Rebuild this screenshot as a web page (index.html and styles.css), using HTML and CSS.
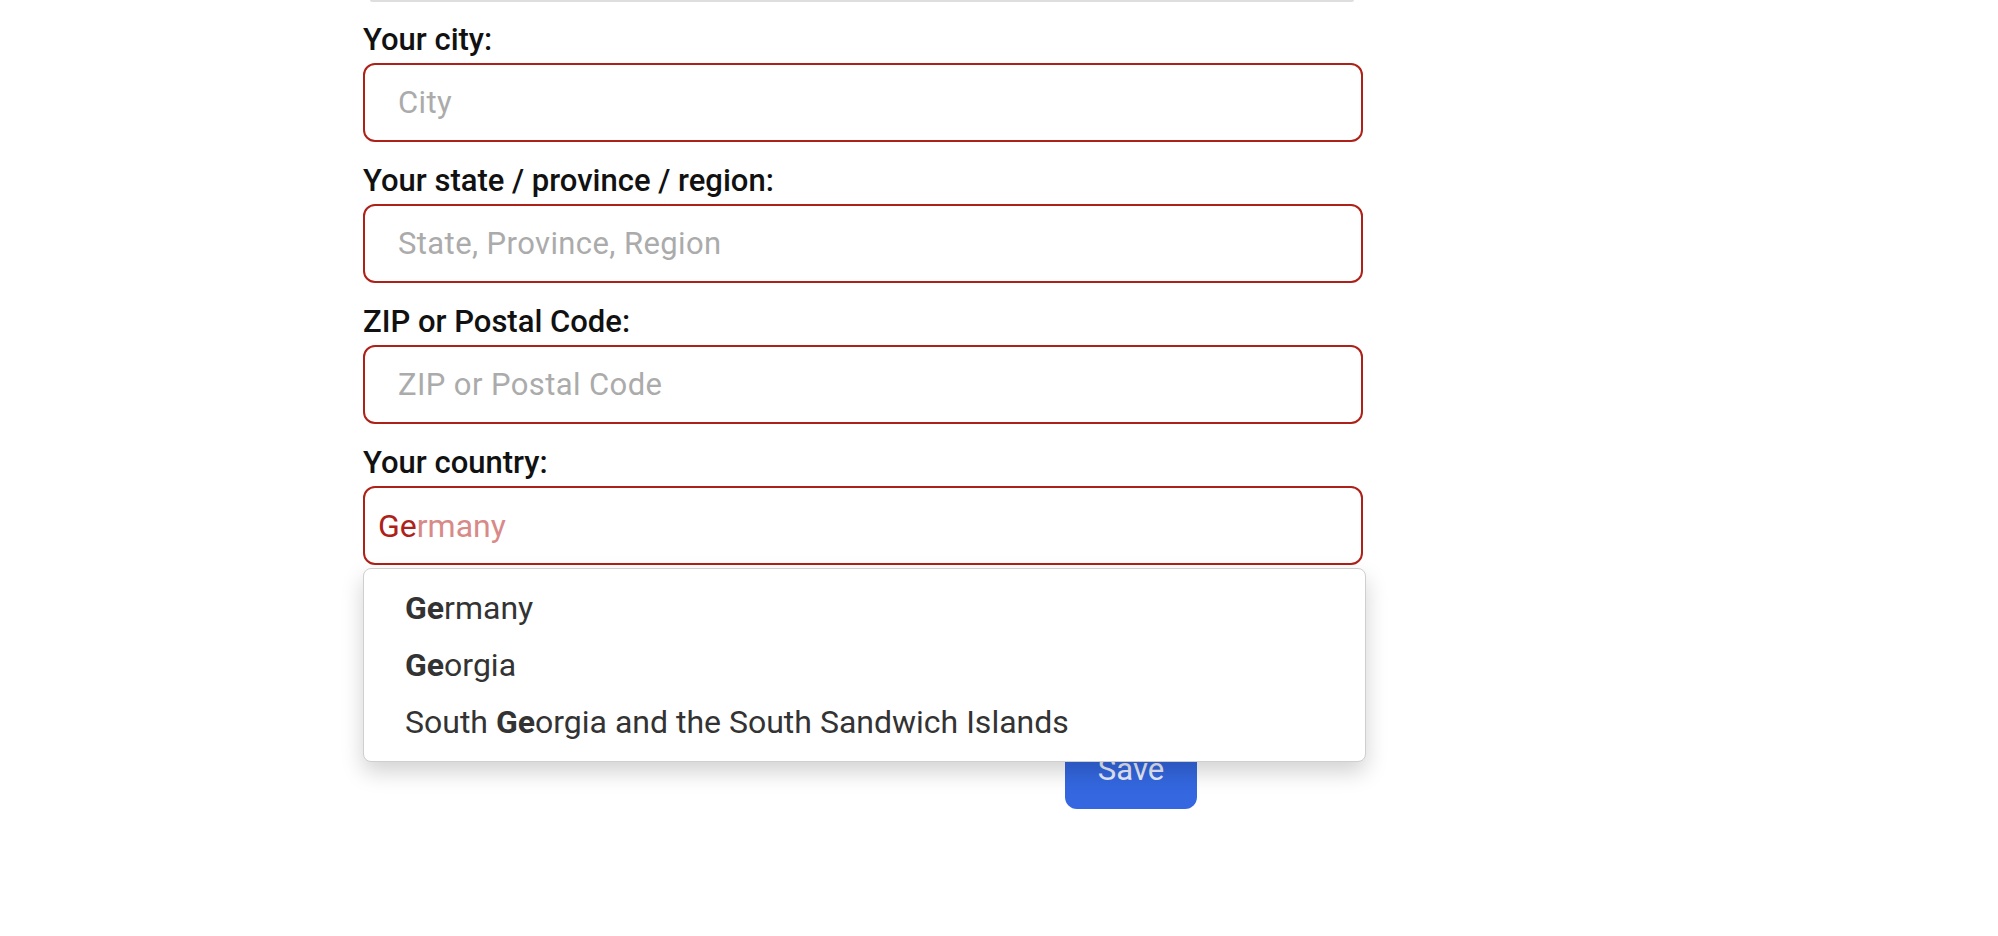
FILE: index.html
```html
<!DOCTYPE html>
<html lang="en">
<head>
<meta charset="utf-8">
<title>Address form</title>
<link rel="stylesheet" href="styles.css">
</head>
<body>
<div class="page">
  <div class="top-edge"></div>
  <form class="form">
    <div class="field">
      <label class="label">Your city:</label>
      <input class="input" type="text" placeholder="City">
    </div>
    <div class="field">
      <label class="label">Your state / province / region:</label>
      <input class="input" type="text" placeholder="State, Province, Region">
    </div>
    <div class="field">
      <label class="label">ZIP or Postal Code:</label>
      <input class="input" type="text" placeholder="ZIP or Postal Code">
    </div>
    <div class="field field-country">
      <label class="label">Your country:</label>
      <div class="input country-input"><span class="typed">Ge</span><span class="ghost">rmany</span></div>
      <ul class="dropdown">
        <li class="option"><b>Ge</b>rmany</li>
        <li class="option"><b>Ge</b>orgia</li>
        <li class="option">South <b>Ge</b>orgia and the South Sandwich Islands</li>
      </ul>
    </div>
    <div class="field">
      <label class="label">Your phone number:</label>
      <input class="input input-plain" type="text" placeholder="Phone">
    </div>
    <div class="actions">
      <button class="save" type="button">Save</button>
    </div>
  </form>
</div>
</body>
</html>
```

FILE: styles.css
```css
* { box-sizing: border-box; }
html, body {
  margin: 0;
  padding: 0;
  background: #ffffff;
  font-family: Roboto, "Liberation Sans", Arial, sans-serif;
}
.page {
  width: 1000px;
  margin-left: 363px;
}
.top-edge {
  height: 2px;
  margin: 0 9px 0 7px;
  background: #dedede;
  border-radius: 0 0 8px 8px;
}
.form {
  display: flex;
  flex-direction: column;
  gap: 21px;
  padding-top: 20px;
}
.field {
  display: flex;
  flex-direction: column;
  gap: 5px;
}
.field-country { position: relative; }
.label {
  font-size: 31px;
  font-weight: 500;
  line-height: 36px;
  color: #111111;
}
.input {
  display: block;
  width: 100%;
  height: 79px;
  border: 2px solid #ad2119;
  border-radius: 12px;
  padding: 0 20px 0 33px;
  font-family: Roboto, "Liberation Sans", Arial, sans-serif;
  font-size: 31px;
  letter-spacing: 0.4px;
  color: #222;
  background: #fff;
  outline: none;
}
.input::placeholder { color: #ababab; }
.input-plain { border-color: #cfcfcf; }
.country-input {
  display: flex;
  align-items: center;
  padding-left: 13px;
  font-size: 32px;
  letter-spacing: 0;
}
.typed { color: #ad2119; }
.ghost { color: #d88a88; }
.dropdown {
  position: absolute;
  left: 0;
  top: 123px;
  width: 1003px;
  height: 194px;
  margin: 0;
  padding: 11px 0;
  list-style: none;
  background: #fff;
  border: 1.5px solid #cfcfcf;
  border-radius: 8px;
  box-shadow: 0 10px 22px rgba(0, 0, 0, 0.18);
  z-index: 5;
}
.option {
  height: 57px;
  line-height: 57px;
  padding-left: 41px;
  font-size: 32px;
  color: #333333;
  white-space: nowrap;
}
.option b { font-weight: 700; color: #333; }
.actions {
  display: flex;
  padding-left: 702px;
  margin-top: 2px;
}
.save {
  width: 132px;
  height: 80px;
  border: none;
  border-radius: 12px;
  background: #3467e0;
  color: #e9edf8;
  font-family: Roboto, "Liberation Sans", Arial, sans-serif;
  font-size: 31px;
}
```
